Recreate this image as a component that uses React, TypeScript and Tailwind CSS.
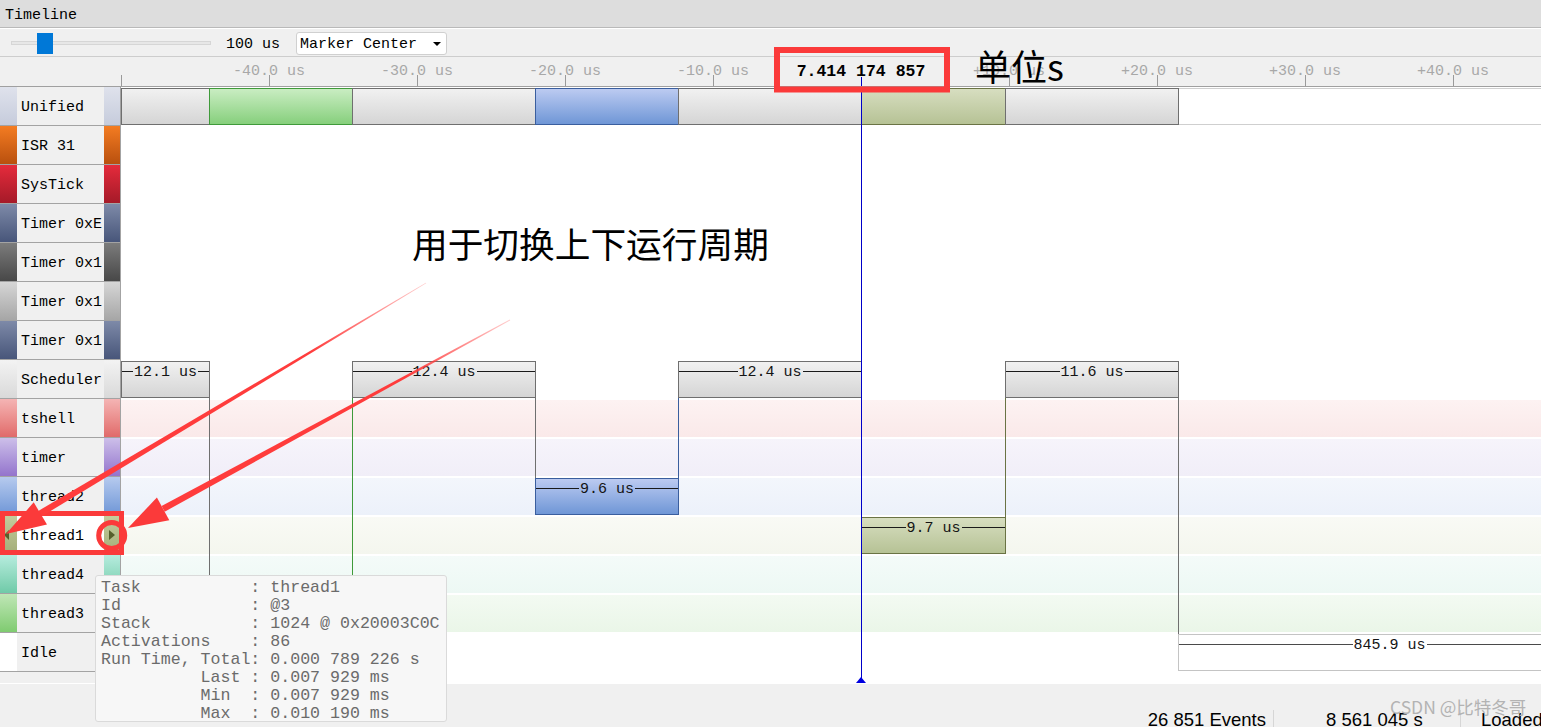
import React from 'react';

// horizontal scale of the trace view: 148px per 10 us, marker at canvas x 740
const US = 14.8;
const MARK = 740;
const ROW = 39;

const tx = (t: number) => MARK + t * US;

type Lane = { name: string; strip: string; band?: string; selected?: boolean };

const lanes: Lane[] = [
  { name: 'Unified', strip: 'bg-linear-to-b from-[#dfe2ec] to-[#c6ccdc]', band: 'border-y border-[#cfcfcf]' },
  { name: 'ISR 31', strip: 'bg-linear-to-b from-[#f47c22] to-[#b9500e]' },
  { name: 'SysTick', strip: 'bg-linear-to-b from-[#e52b3c] to-[#a51a28]' },
  { name: 'Timer 0xE', strip: 'bg-linear-to-b from-[#7e8aa8] to-[#48567a]' },
  { name: 'Timer 0x1', strip: 'bg-linear-to-b from-[#7c7c7c] to-[#484848]' },
  { name: 'Timer 0x1', strip: 'bg-linear-to-b from-[#d6d6d6] to-[#a6a6a6]' },
  { name: 'Timer 0x1', strip: 'bg-linear-to-b from-[#7e8aa8] to-[#48567a]' },
  { name: 'Scheduler', strip: 'bg-linear-to-b from-[#f3f3f3] to-[#d9d9d9]' },
  { name: 'tshell', strip: 'bg-linear-to-b from-[#f4b4b4] to-[#e06a6a]', band: 'bg-linear-to-b from-[#fdf2f2] to-[#fae9e9]' },
  { name: 'timer', strip: 'bg-linear-to-b from-[#cdbfe9] to-[#9474cc]', band: 'bg-linear-to-b from-[#f6f4fb] to-[#f1eef8]' },
  { name: 'thread2', strip: 'bg-linear-to-b from-[#b6caee] to-[#6f96d6]', band: 'bg-linear-to-b from-[#f3f6fc] to-[#ecf1fa]' },
  { name: 'thread1', strip: 'bg-linear-to-b from-[#c4cc9c] to-[#a3ad78]', band: 'bg-linear-to-b from-[#f9faf5] to-[#f4f6ee]', selected: true },
  { name: 'thread4', strip: 'bg-linear-to-b from-[#b6ecde] to-[#6fcaa8]', band: 'bg-linear-to-b from-[#f4fbf9] to-[#edf8f4]' },
  { name: 'thread3', strip: 'bg-linear-to-b from-[#bfe6b6] to-[#7fcb70]', band: 'bg-linear-to-b from-[#f3faf2] to-[#eaf6e8]' },
  { name: 'Idle', strip: 'bg-white' },
];

const GRAY = 'bg-linear-to-b from-[#f1f1f1] to-[#d5d5d5] border-[#6f6f6f]';
const GREEN = 'bg-linear-to-b from-[#c9edc2] to-[#86cf7c] border-[#3f9a3a]';
const BLUE = 'bg-linear-to-b from-[#bccbf1] to-[#6f96d6] border-[#3a5e9e]';
const OLIVE = 'bg-linear-to-b from-[#d7dec0] to-[#b6c295] border-[#6a7344]';
const IDLE = 'bg-white border-[#c4c4c4]';

type Bar = { lane: number; x: number; w: number; fill: string; label?: string };

const bars: Bar[] = [
  { lane: 0, x: 0, w: 88, fill: GRAY },
  { lane: 0, x: 88, w: 143, fill: GREEN },
  { lane: 0, x: 231, w: 183, fill: GRAY },
  { lane: 0, x: 414, w: 143, fill: BLUE },
  { lane: 0, x: 557, w: 183, fill: GRAY },
  { lane: 0, x: 740, w: 144, fill: OLIVE },
  { lane: 0, x: 884, w: 173, fill: GRAY },
  { lane: 7, x: 0, w: 88, fill: GRAY, label: '12.1 us' },
  { lane: 7, x: 231, w: 183, fill: GRAY, label: '12.4 us' },
  { lane: 7, x: 557, w: 183, fill: GRAY, label: '12.4 us' },
  { lane: 7, x: 884, w: 173, fill: GRAY, label: '11.6 us' },
  { lane: 10, x: 414, w: 143, fill: BLUE, label: '9.6 us' },
  { lane: 11, x: 740, w: 144, fill: OLIVE, label: '9.7 us' },
  { lane: 13, x: 88, w: 143, fill: GREEN, label: '9.7 us' },
  { lane: 14, x: 1057, w: 422, fill: IDLE, label: '845.9 us' },
];

// context switch lines between scheduler and tasks
const links = [
  { x: 88, y1: 311, y2: 508, c: 'bg-[#6f6f6f]' },
  { x: 231, y1: 311, y2: 508, c: 'bg-[#3f9a3a]' },
  { x: 414, y1: 311, y2: 391, c: 'bg-[#6f6f6f]' },
  { x: 557, y1: 311, y2: 391, c: 'bg-[#3a5e9e]' },
  { x: 884, y1: 311, y2: 430, c: 'bg-[#6a7344]' },
  { x: 1057, y1: 311, y2: 547, c: 'bg-[#6f6f6f]' },
];

const ticks = [-40, -30, -20, -10, 10, 20, 30, 40];

const tooltip = [
  'Task           : thread1',
  'Id             : @3',
  'Stack          : 1024 @ 0x20003C0C',
  'Activations    : 86',
  'Run Time, Total: 0.000 789 226 s',
  '          Last : 0.007 929 ms',
  '          Min  : 0.007 929 ms',
  '          Max  : 0.010 190 ms',
];

function arrow(sx: number, sy: number, ex: number, ey: number, head = 40, half = 13, w0 = 0.4, w1 = 3.2) {
  const dx = ex - sx;
  const dy = ey - sy;
  const len = Math.hypot(dx, dy);
  const ux = dx / len;
  const uy = dy / len;
  const nx = -uy;
  const ny = ux;
  const bx = ex - ux * head;
  const by = ey - uy * head;
  const p = (x: number, y: number) => `${x.toFixed(1)},${y.toFixed(1)}`;
  return {
    shaft: [p(sx + nx * w0, sy + ny * w0), p(bx + nx * w1, by + ny * w1), p(bx - nx * w1, by - ny * w1), p(sx - nx * w0, sy - ny * w0)].join(' '),
    tip: [p(ex, ey), p(bx + nx * half, by + ny * half), p(bx - nx * half, by - ny * half)].join(' '),
  };
}

function BarLabel({ text, line }: { text: string; line: string }) {
  return (
    <div className="mt-px flex h-[16px] items-center">
      <div className={`h-px flex-1 ${line}`} />
      <span className="translate-y-px px-px text-[15px] leading-none text-[#141414]">{text}</span>
      <div className={`h-px flex-1 ${line}`} />
    </div>
  );
}

function LaneLabel({ lane }: { lane: Lane }) {
  return (
    <div className="flex h-[39px] border-b border-[#a3a3a3]">
      <div className={`flex w-[17px] items-center justify-center ${lane.strip}`}>
        {lane.selected && <div className="ml-[-4px] h-0 w-0 border-y-[5px] border-r-[5px] border-y-transparent border-r-[#565f2c]" />}
      </div>
      <div className={`flex flex-1 items-center pl-[4px] pt-[4px] text-[15px] text-black ${lane.selected ? 'bg-white' : 'bg-[#f0f0f0]'}`}>
        {lane.name}
      </div>
      <div className={`flex w-[16px] items-center justify-center ${lane.strip}`}>
        {lane.selected && <div className="h-0 w-0 border-y-[5px] border-l-[6px] border-y-transparent border-l-[#565f2c]" />}
      </div>
    </div>
  );
}

export default function App() {
  const a1 = arrow(426, 283, 6, 534);
  const a2 = arrow(510, 320, 128, 528);

  return (
    <div className="relative flex h-[727px] w-[1541px] flex-col overflow-hidden bg-[#f0f0f0] font-['Liberation_Mono',monospace]">
      {/* title */}
      <div className="flex h-[28px] shrink-0 items-center border-b border-[#b9b9b9] bg-[#dddddd] px-[5px] pt-[5px] text-[15px] text-black">
        Timeline
      </div>

      {/* toolbar */}
      <div className="flex h-[29px] shrink-0 items-center border-b border-[#cdcdcd] border-t border-t-white pt-[2px]">
        <div className="relative ml-[11px] h-[21px] w-[200px]">
          <div className="absolute inset-x-0 top-[8px] h-[4px] border border-[#d6d6d6] bg-[#e7e7e7]" />
          <div className="absolute left-[26px] top-0 h-[21px] w-[16px] bg-[#0078d7]" />
        </div>
        <span className="ml-[15px] pt-[3px] text-[15px] text-black">100 us</span>
        <div className="ml-[16px] flex h-[23px] w-[151px] items-center justify-between rounded-[3px] border border-[#d0d0d0] bg-white pl-[3px] pr-[5px] text-[15px] text-black">
          <span className="pt-[3px]">Marker Center</span>
          <div className="h-0 w-0 border-x-[4px] border-t-[4px] border-x-transparent border-t-black" />
        </div>
      </div>

      {/* ruler */}
      <div className="flex h-[30px] shrink-0 border-b border-[#a0a0a0]">
        <div className="w-[121px]" />
        <div className="relative flex-1">
          <div className="absolute left-0 top-[18px] h-[11px] w-px bg-[#9a9a9a]" />
          {ticks.map((t) => (
            <React.Fragment key={t}>
              <div className="absolute top-[18px] h-[11px] w-px bg-[#9a9a9a]" style={{ left: tx(t) }} />
              <div className="absolute top-[7px] -translate-x-1/2 whitespace-pre text-[15px] leading-[16px] text-[#a8a8a8]" style={{ left: tx(t) }}>
                {`${t > 0 ? '+' : '-'}${Math.abs(t).toFixed(1)} us`}
              </div>
            </React.Fragment>
          ))}
          <div className="absolute left-[740px] top-[6px] -translate-x-1/2 whitespace-pre text-[16.5px] font-bold leading-[18px] text-black">
            7.414 174 857
          </div>
          <div className="absolute bottom-0 left-[740px] top-[20px] w-px bg-[#0000c8]" />
        </div>
      </div>

      {/* lanes */}
      <div className="flex h-[596px] shrink-0">
        <div className="w-[121px] border-r border-[#a3a3a3] bg-[#f0f0f0]">
          {lanes.map((lane, i) => (
            <LaneLabel key={i} lane={lane} />
          ))}
        </div>
        <div className="relative flex-1 overflow-hidden bg-white">
          {lanes.map((lane, i) => (
            <div key={i} className="h-[39px] pt-px">
              <div className={`h-[37px] ${lane.band ?? ''}`} />
            </div>
          ))}

          {links.map((l) => (
            <div key={l.x} className={`absolute w-px ${l.c}`} style={{ left: l.x, top: l.y1, height: l.y2 - l.y1 }} />
          ))}

          {bars.map((b, i) => (
            <div
              key={i}
              className={`absolute h-[37px] border ${b.fill}`}
              style={{ left: b.x, top: b.lane * ROW + 1, width: b.w + 1 }}
            >
              {b.label && <BarLabel text={b.label} line={b.fill === IDLE ? 'bg-[#4a4a4a]' : 'bg-[#1a1a1a]'} />}
            </div>
          ))}

          <div className="absolute bottom-0 left-[740px] top-0 w-px bg-[#0000c8]" />
          <div className="absolute bottom-0 left-[735px] h-0 w-0 border-x-[5px] border-b-[6px] border-x-transparent border-b-[#0000e0]" />
        </div>
      </div>

      {/* status bar */}
      <div className="relative flex min-h-0 flex-1 overflow-hidden border-t border-white pt-[26px] font-['Liberation_Sans',sans-serif] text-[18.5px] leading-[20px] text-black">
        <div className="w-[1273px] shrink-0 whitespace-nowrap pr-[7px] text-right">26 851 Events</div>
        <div className="w-[187px] shrink-0 whitespace-nowrap border-l border-[#d6d6d6] pl-[52px]">8 561 045 s</div>
        <div className="whitespace-nowrap border-l border-[#d6d6d6] pl-[20px]">Loaded</div>
      </div>

      {/* hover tooltip */}
      <div className="absolute left-[95px] top-[575px] h-[147px] w-[352px] rounded-[3px] border border-[#dadada] bg-[#f7f7f7] pl-[5px] pt-[3px] text-[16.6px] leading-[18px] text-[#6b6b6b]">
        {tooltip.map((line, i) => (
          <div key={i} className="whitespace-pre">{line}</div>
        ))}
      </div>

      {/* annotations */}
      <div className="absolute left-[975px] top-[47px] font-['Noto_Sans_CJK_SC',sans-serif] text-[36px] leading-none text-black">
        单位s
      </div>
      <div className="absolute left-[412px] top-[225px] whitespace-nowrap font-['Noto_Sans_CJK_SC',sans-serif] text-[35.7px] leading-none text-black">
        用于切换上下运行周期
      </div>
      <svg className="pointer-events-none absolute left-0 top-0" width="1541" height="727">
        <defs>
          <linearGradient id="fade1" gradientUnits="userSpaceOnUse" x1="426" y1="283" x2="40" y2="515">
            <stop offset="0" stopColor="#ff3c3c" stopOpacity="0.25" />
            <stop offset="0.3" stopColor="#ff3c3c" stopOpacity="1" />
          </linearGradient>
          <linearGradient id="fade2" gradientUnits="userSpaceOnUse" x1="510" y1="320" x2="160" y2="510">
            <stop offset="0" stopColor="#ff3c3c" stopOpacity="0.25" />
            <stop offset="0.3" stopColor="#ff3c3c" stopOpacity="1" />
          </linearGradient>
        </defs>
        <rect x="777" y="50" width="170" height="39.5" fill="none" stroke="#fb3a3a" strokeWidth="6" />
        <rect x="2.5" y="513.5" width="119" height="39" fill="none" stroke="#fb3a3a" strokeWidth="5" />
        <circle cx="111.7" cy="535.5" r="13" fill="none" stroke="#fb3a3a" strokeWidth="5" />
        <polygon points={a1.shaft} fill="url(#fade1)" />
        <polygon points={a1.tip} fill="#fb3a3a" />
        <polygon points={a2.shaft} fill="url(#fade2)" />
        <polygon points={a2.tip} fill="#fb3a3a" />
      </svg>
      <div className="absolute left-[1390px] top-[696px] whitespace-nowrap font-['Noto_Sans_CJK_SC',sans-serif] text-[17.5px] leading-[22px] text-[#b3b3b3]">
        CSDN @比特冬哥
      </div>
    </div>
  );
}
